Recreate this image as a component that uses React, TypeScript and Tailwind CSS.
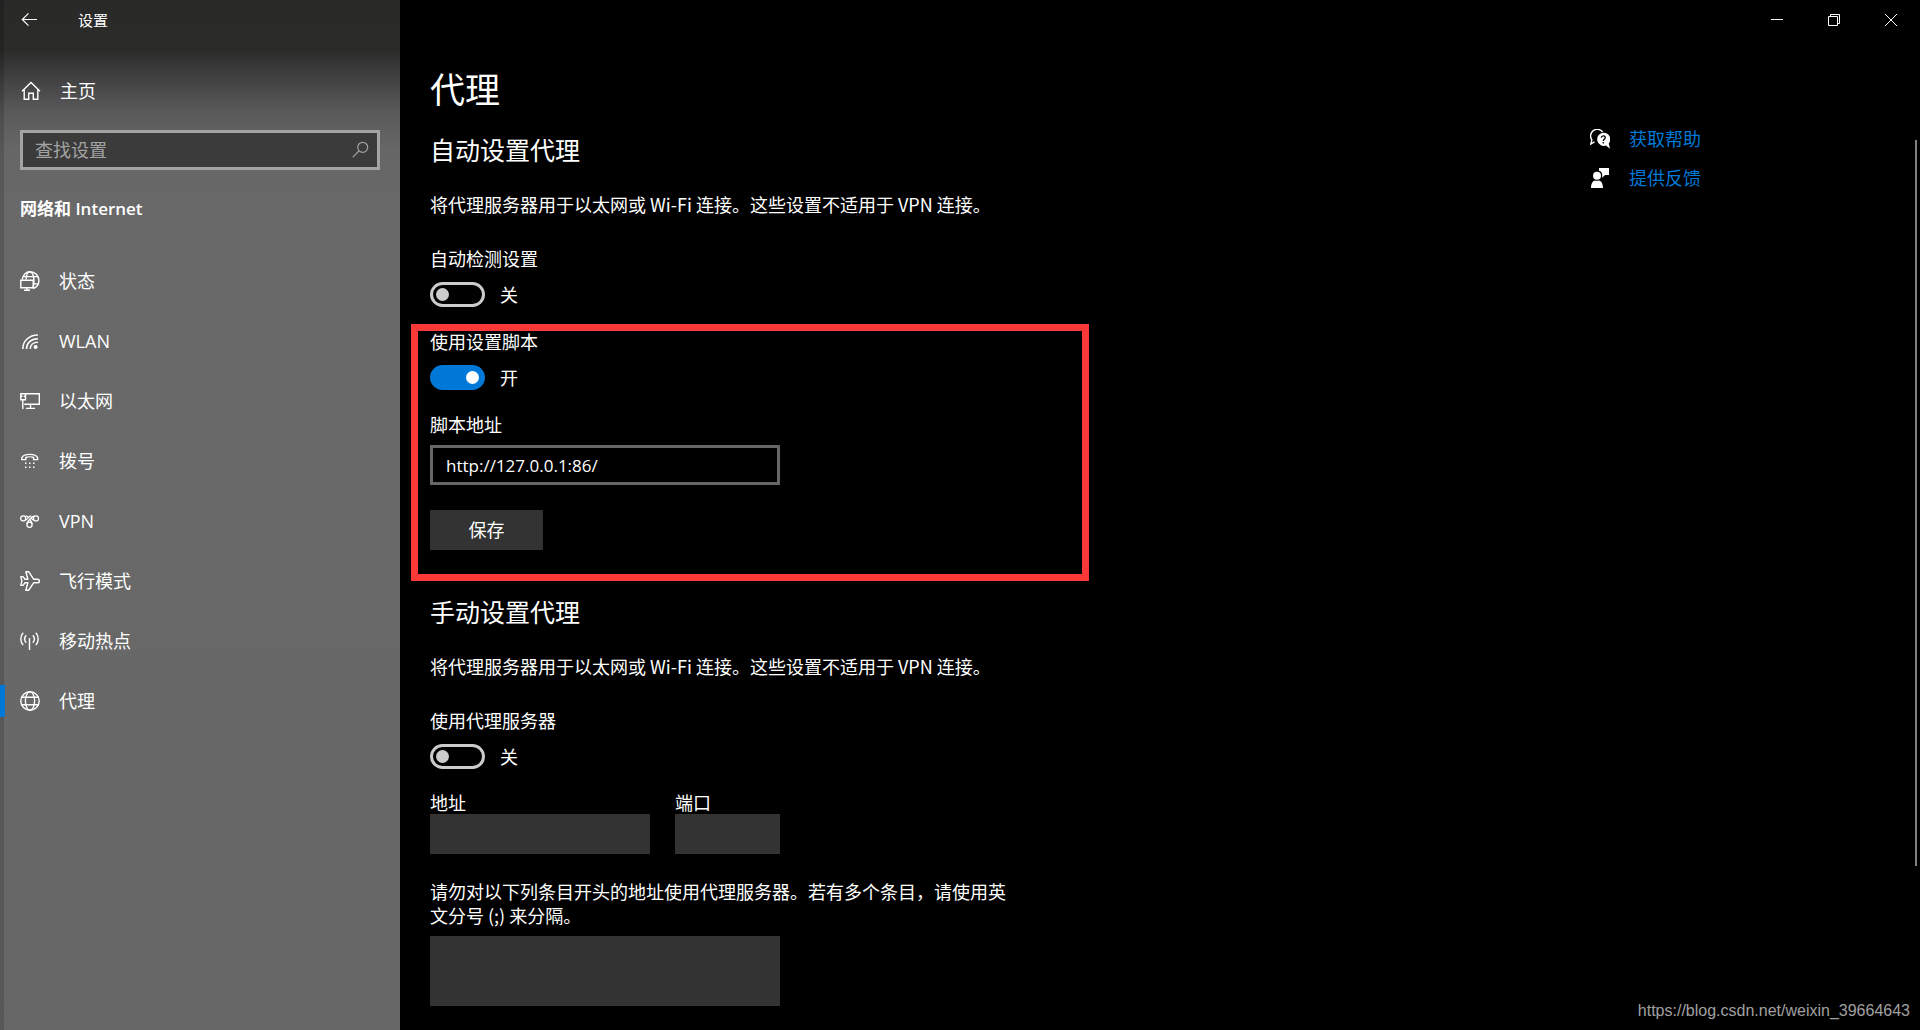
import { useState, type ReactNode } from "react";

type IconProps = { children: ReactNode; width?: number };

function Icon({ children, width = 1.4 }: IconProps) {
  return (
    <svg
      viewBox="0 0 20 20"
      className="size-5 shrink-0"
      fill="none"
      stroke="currentColor"
      strokeWidth={width}
      aria-hidden="true"
    >
      {children}
    </svg>
  );
}

const navItems: { label: string; icon: ReactNode }[] = [
  {
    label: "状态",
    icon: (
      <Icon>
        <path d="M2.2 8.6C2.8 4.2 5.900.8 10 .8c5 0 8.900 3.900 8.900 8.700 0 4-2.600 7-5.900 8" />
        <path d="M6 8.600C6.300 4 7.800.900 10 .900s4 3.800 4 8.600c0 3-.400 5.600-1.200 7.200" />
        <path d="M3 5.600h15M13.500 12.900h4.700" />
        <path d="M.8 9.300h12.400v7.500H.800zM7 16.800v2.100M4 19.200h6" />
      </Icon>
    ),
  },
  {
    label: "WLAN",
    icon: (
      <Icon width={1.5}>
        <path d="M2.800 18C2.800 10 9 3.900 17.900 3.900M6.500 18c0-6 4.500-10.300 11.400-10.300M10.300 18c0-4 3-6.700 7.600-6.700" />
        <circle cx="15.600" cy="16" r="2" fill="currentColor" stroke="none" />
      </Icon>
    ),
  },
  {
    label: "以太网",
    icon: (
      <Icon>
        <path d="M5.500 2.700h13.800v10.600H4.200M10.500 13.300v4M6 17.400h9M2.800 9v9" />
        <path d="M.8 2.700h4.700v6H.800zM.8 5.200h1.700M3.800 5.200h1.700" />
      </Icon>
    ),
  },
  {
    label: "拨号",
    icon: (
      <Icon>
        <path d="M1.800 8.600V6.800C3.500 2.200 16 2.200 17.600 6.800v1.800h-4V6.500c-2-.9-6-.9-7.800 0v2.100z" />
        <path d="M5 12.300h1.500M9 12.300h1.500M13 12.300h1.500M5 16.300h1.500M9 16.300h1.500M13 16.300h1.500" />
      </Icon>
    ),
  },
  {
    label: "VPN",
    icon: (
      <Icon width={1.300}>
        <circle cx="3.200" cy="7.400" r="2.500" />
        <circle cx="16" cy="7.400" r="2.500" />
        <circle cx="9.500" cy="13.800" r="2.600" />
        <path d="M5 9.200c1.400 0 1.900-1 3-2.400 1-1.300 1.700-2 3.200-2M14 9.200c-1.400 0-2-1-3-2.400M7 12.800c.2-2 1.500-3 3-4.800 1.400-1.800 2.600-3.200 4.500-2.700M12 12.800c0-1.700-.900-2.600-2-3.900M5 5.500c1.400-.8 2.600-.3 3.400.8" />
      </Icon>
    ),
  },
  {
    label: "飞行模式",
    icon: (
      <Icon>
        <path
          strokeLinejoin="round"
          d="M5.800.8h3l4.800 7.400h4c2.400 0 2.400 3.600 0 3.600h-4L8.800 19.200h-3l2.100-7.400H5l-2 2.600H.8L1.900 10 .800 5.600H3l2 2.600h2.900z"
        />
      </Icon>
    ),
  },
  {
    label: "移动热点",
    icon: (
      <Icon>
        <path d="M9.500 7v12M3.200 1.800c-3.200 3.400-3.200 8.800 0 12.300M15.800 1.800c3.200 3.400 3.200 8.800 0 12.300M6.200 4.200c-2 2.300-2 5.300 0 7.600M12.800 4.200c2 2.300 2 5.300 0 7.600" />
      </Icon>
    ),
  },
  {
    label: "代理",
    icon: (
      <Icon>
        <circle cx="10" cy="10" r="9.200" />
        <ellipse cx="10" cy="10" rx="4.600" ry="9.200" />
        <path d="M1.800 6.200h16.400M1.800 13.800h16.400" />
      </Icon>
    ),
  },
];

type ToggleProps = { id: string; label: string; initial?: boolean };

function Toggle({ id, label, initial = false }: ToggleProps) {
  const [on, setOn] = useState(initial);
  return (
    <div>
      <label htmlFor={id} className="block text-lg leading-[22px]">
        {label}
      </label>
      <div className="mt-3 flex h-[25px] items-center gap-[15px]">
        <input
          id={id}
          type="checkbox"
          role="switch"
          checked={on}
          onChange={() => setOn(!on)}
          className="flex h-[25px] w-[55px] shrink-0 appearance-none items-center rounded-full border-[3px] border-[#cccccc] px-[3px] before:size-[13px] before:rounded-full before:bg-[#cccccc] checked:justify-end checked:border-[#0078d7] checked:bg-[#0078d7] checked:before:bg-white"
        />
        <span className="text-lg leading-6">{on ? "开" : "关"}</span>
      </div>
    </div>
  );
}

function Sidebar() {
  return (
    <aside className="w-[400px] shrink-0 border-l-4 border-black/15 bg-[linear-gradient(180deg,#292928_0px,#2b2b2a_50px,#414141_78px,#5a5a5a_112px,#666666_150px,#696969_220px,#676767_100%)] bg-origin-border">
      <header className="-ml-1 flex h-10 items-center gap-[38px] pl-5">
        <button type="button" aria-label="返回">
          <Icon width={1.2}>
            <path d="M17 9.500H2.500M8.500 3.300 2.300 9.500l6.200 6.200" />
          </Icon>
        </button>
        <span className="text-[15px] leading-6">设置</span>
      </header>
      <a href="#home" className="mt-[21px] -ml-1 flex h-15 items-center gap-[19px] pl-[21px] text-lg">
        <Icon>
          <path d="M1 10.300 10 1.500l9 8.800M3.200 8.500v9.700h4.500v-6h4.600v6h4.500V8.500" />
        </Icon>
        主页
      </a>
      <label className="mt-[9px] mr-5 ml-4 flex h-10 items-center border-[3px] border-[#a3a3a3] bg-[#3b3b3b] pr-1.5 pl-3 text-[#a3a3a3]">
        <input
          type="search"
          aria-label="查找设置"
          placeholder="查找设置"
          className="min-w-0 flex-1 bg-transparent text-lg outline-none placeholder:text-[#a3a3a3]"
        />
        <Icon width={1.200}>
          <circle cx="11.700" cy="7.300" r="5" />
          <path d="m8 11-6.200 6.200" />
        </Icon>
      </label>
      <h2 className="mt-[27px] ml-4 text-[17px] leading-6 font-bold">
        网络和 <span className="font-semibold">Internet</span>
      </h2>
      <nav className="mt-[30px] -ml-1">
        {navItems.map(({ label, icon }) => (
          <a
            key={label}
            href={`#${label}`}
            aria-current={label === "代理" ? "page" : undefined}
            className="group flex h-15 items-center text-lg"
          >
            <span className="h-8 w-[5px] group-aria-[current=page]:bg-[#0078d7]" />
            <span className="ml-[15px]">{icon}</span>
            <span className="ml-[19px] leading-6">{label}</span>
          </a>
        ))}
      </nav>
    </aside>
  );
}

function WindowButton({ label, children }: { label: string; children: ReactNode }) {
  return (
    <button type="button" aria-label={label} className="flex h-10 w-[57px] items-center justify-center">
      <svg viewBox="0 0 12 12" className="size-3" fill="none" stroke="white" aria-hidden="true">
        {children}
      </svg>
    </button>
  );
}

function Section({ title }: { title: string }) {
  return (
    <>
      <h2 className="text-[25px] leading-8">{title}</h2>
      <p className="mt-[26px] mb-8 font-['Noto_Sans_CJK_SC',sans-serif] text-lg leading-6">
        将代理服务器用于以太网或 Wi-Fi 连接。这些设置不适用于 VPN 连接。
      </p>
    </>
  );
}

export default function App() {
  const [script, setScript] = useState("http://127.0.0.1:86/");
  return (
    <div className="relative flex min-h-screen bg-black font-['Open_Sans','Noto_Sans_CJK_SC',sans-serif] text-white">
      <Sidebar />
      <div className="flex min-w-0 flex-1 flex-col">
        <header className="flex h-10 justify-end pr-px">
          <WindowButton label="最小化">
            <path d="M0 5.500h12" />
          </WindowButton>
          <WindowButton label="还原">
            <path d="M.5 2.500h9v9h-9zM2.500 2.500v-2h9v9h-2" />
          </WindowButton>
          <WindowButton label="关闭">
            <path d="m0 0 12 12M12 0 0 12" />
          </WindowButton>
        </header>
        <div className="flex flex-1">
          <main className="min-w-0 flex-1 pt-[26px] pb-6 pl-[30px]">
            <h1 className="mb-5 text-[35px] leading-12">代理</h1>
            <Section title="自动设置代理" />
            <Toggle id="auto-detect" label="自动检测设置" />
            <section className="mt-[17px] mb-[15px] -ml-[19px] max-w-[678px] border-[7px] border-[#fb3838] pb-6 pl-3">
              <Toggle id="use-script" label="使用设置脚本" initial />
              <label htmlFor="script-address" className="mt-[23px] block text-lg leading-6">
                脚本地址
              </label>
              <input
                id="script-address"
                type="text"
                value={script}
                onChange={(e) => setScript(e.target.value)}
                className="mt-2 block h-10 w-[350px] border-[3px] border-[#666666] bg-black px-[13px] text-[17px] outline-none"
              />
              <button type="button" className="mt-[25px] block h-10 w-[113px] bg-[#333333] text-lg">
                保存
              </button>
            </section>
            <Section title="手动设置代理" />
            <Toggle id="use-proxy" label="使用代理服务器" />
            <div className="mt-[23px] flex w-[350px] gap-[25px]">
              <label className="block min-w-0 flex-1 text-lg leading-[22px]">
                地址
                <input type="text" disabled className="block h-10 w-full bg-[#333333] px-3" />
              </label>
              <label className="block w-[105px] text-lg leading-[22px]">
                端口
                <input type="text" disabled className="block h-10 w-full bg-[#333333] px-3" />
              </label>
            </div>
            <label
              htmlFor="exceptions"
              className="mt-[25px] block max-w-[580px] font-['Noto_Sans_CJK_SC',sans-serif] text-lg leading-6"
            >
              请勿对以下列条目开头的地址使用代理服务器。若有多个条目，请使用英
              <br />
              文分号 (;) 来分隔。
            </label>
            <textarea
              id="exceptions"
              disabled
              className="mt-[9px] block h-[70px] w-[350px] resize-none bg-[#333333] px-3"
            />
          </main>
          <aside className="flex w-[330px] shrink-0 flex-col gap-[15px] pt-[87px] text-lg leading-6 text-[#0078d7]">
            <a href="#help" className="flex items-center gap-[19px]">
              <svg viewBox="0 0 20 20" className="size-5 shrink-0" fill="none" aria-hidden="true">
                <path
                  d="M4.500 12.800.8 15l1.100-4A6.300 6.300 0 1 1 12.600 3"
                  stroke="white"
                  strokeWidth="1.400"
                />
                <path
                  d="M13.300 3.700a6.600 6.600 0 1 0 2.700 12.800l4 3.200-1.200-5.200a6.600 6.600 0 0 0-5.500-10.800z"
                  fill="white"
                />
                <path
                  d="M11.300 8.700c.2-2.600 4-2.500 3.900 0 0 1.600-1.900 1.600-1.900 3.300M13.300 13v1.500"
                  stroke="black"
                  strokeWidth="1.300"
                />
              </svg>
              获取帮助
            </a>
            <a href="#feedback" className="flex items-center gap-[19px]">
              <svg viewBox="0 0 20 20" className="size-5 shrink-0" fill="white" aria-hidden="true">
                <path d="M9 0h10v7h-4l-2.800 2.800V7c0-2.300-1-3.800-3.200-4.300z" />
                <circle cx="7" cy="7.700" r="4" />
                <path d="M1 20c0-4.600 1.800-7.300 4-7.600 1.300.6 2.700.6 4 0 2.200.3 4 3 4 7.600z" />
              </svg>
              提供反馈
            </a>
          </aside>
        </div>
      </div>
      <div className="absolute top-[140px] right-[3px] h-[726px] w-0.5 bg-[#808080]" />
      <span className="absolute right-2.5 bottom-[7px] font-['Liberation_Sans',sans-serif] text-base leading-6 text-[#a0a0a0]">
        https://blog.csdn.net/weixin_39664643
      </span>
    </div>
  );
}
